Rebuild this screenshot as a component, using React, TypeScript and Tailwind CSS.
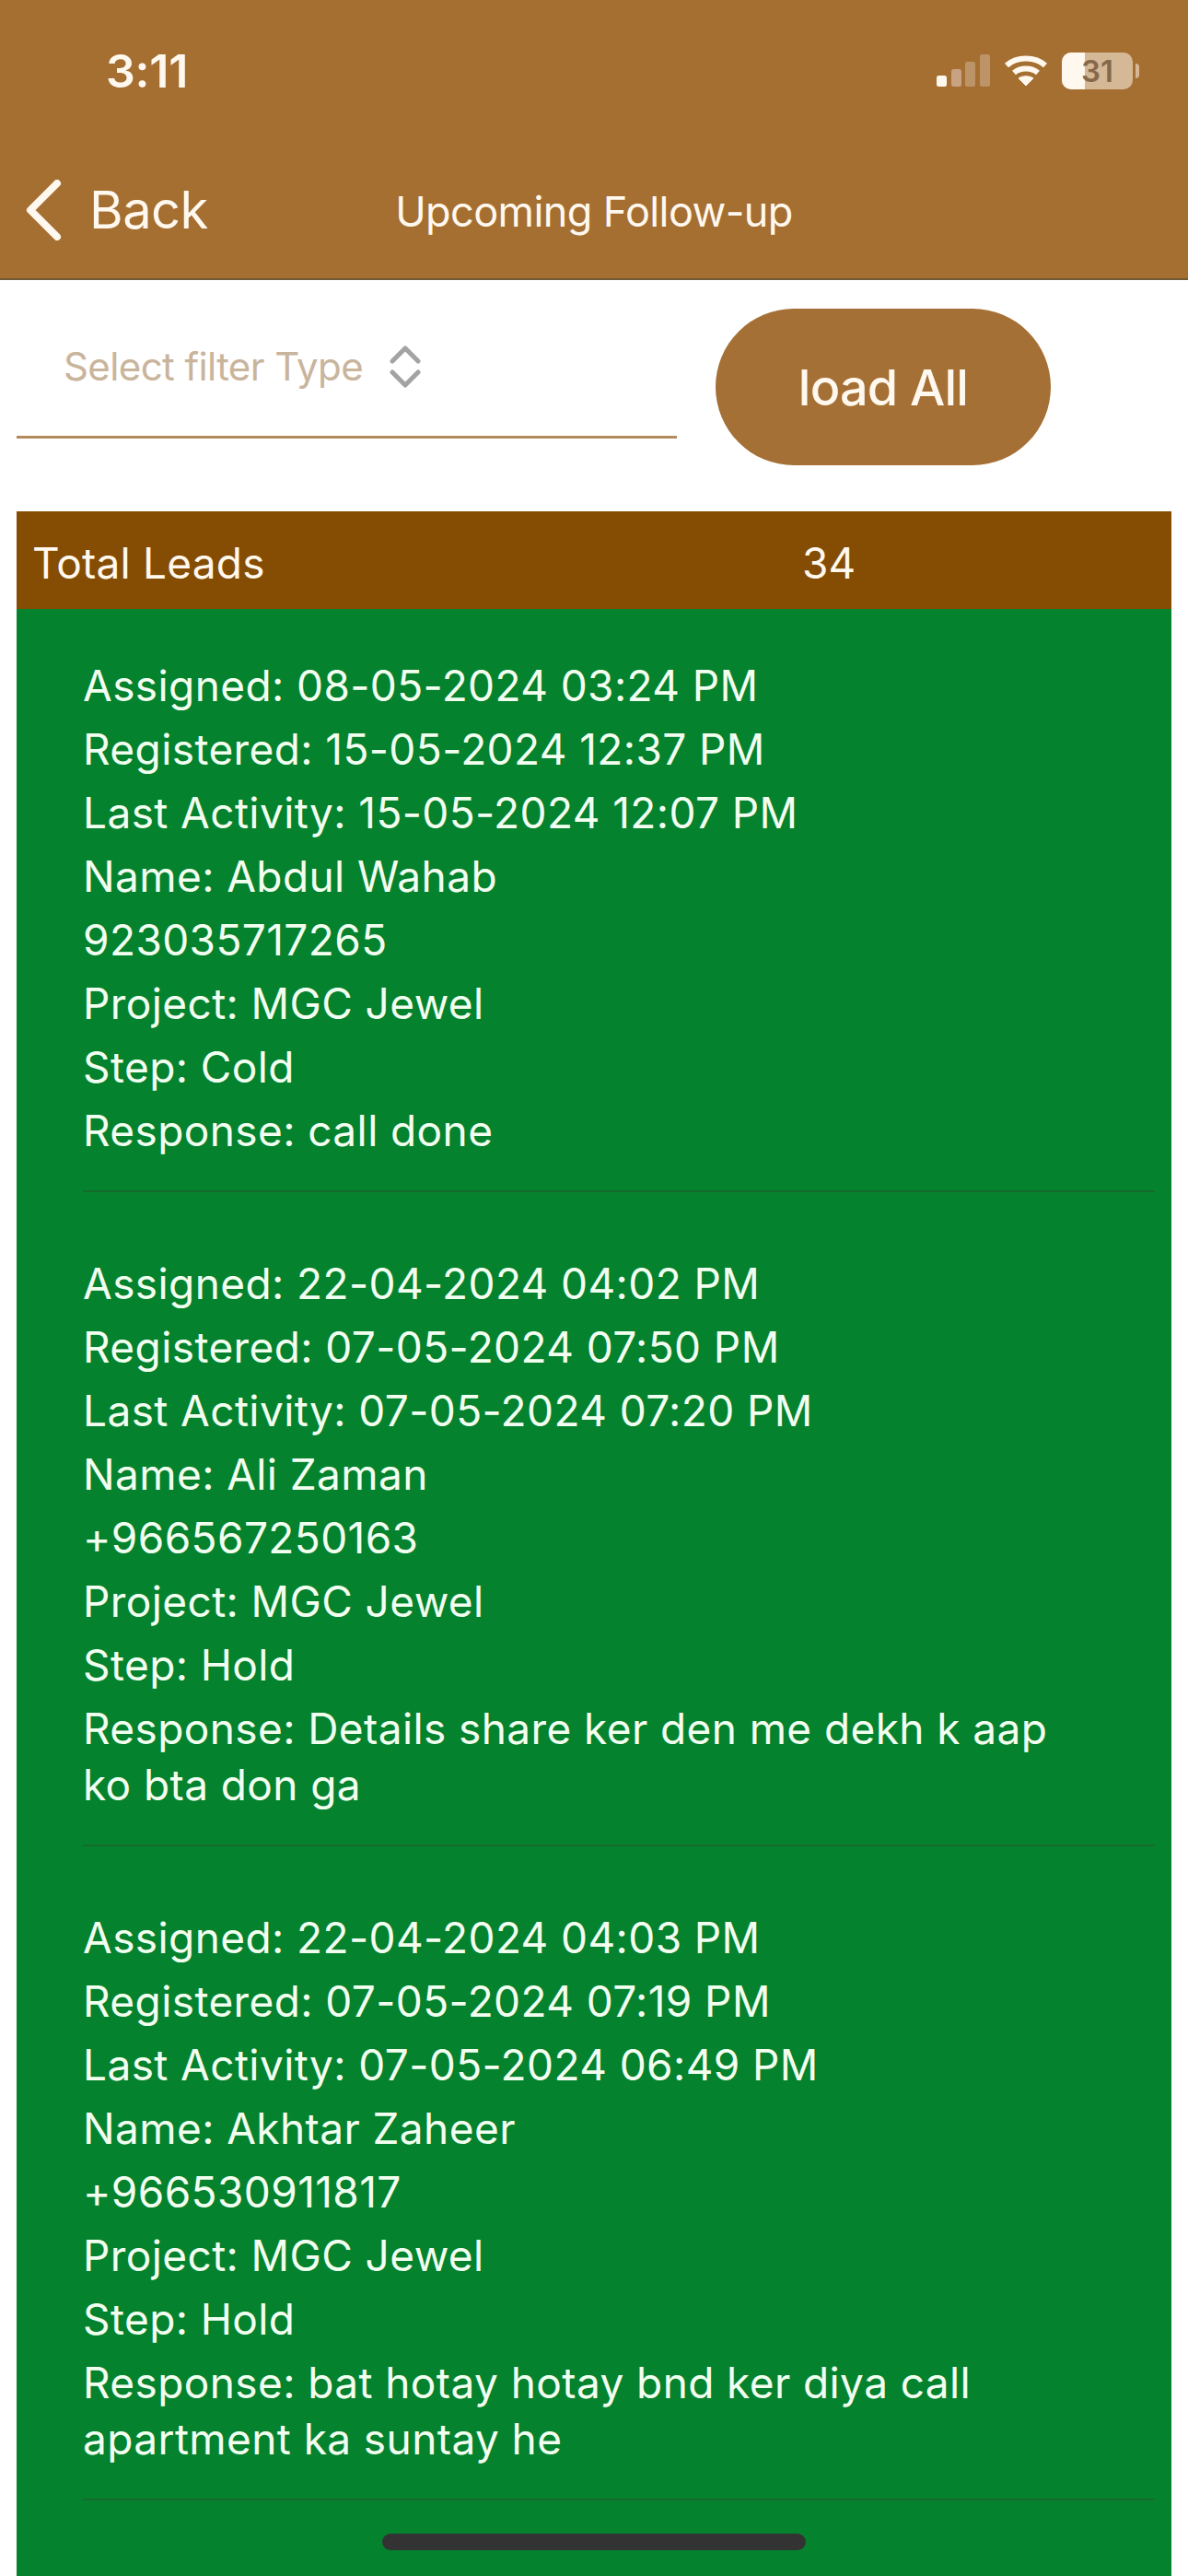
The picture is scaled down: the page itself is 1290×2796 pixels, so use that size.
const font = "font-['Inter','Liberation_Sans',sans-serif]";

type Lead = {
  assigned: string;
  registered: string;
  activity: string;
  name: string;
  phone: string;
  step: string;
  response: string;
};

const leads: Lead[] = [
  {
    assigned: "08-05-2024 03:24 PM",
    registered: "15-05-2024 12:37 PM",
    activity: "15-05-2024 12:07 PM",
    name: "Abdul Wahab",
    phone: "923035717265",
    step: "Cold",
    response: "call done",
  },
  {
    assigned: "22-04-2024 04:02 PM",
    registered: "07-05-2024 07:50 PM",
    activity: "07-05-2024 07:20 PM",
    name: "Ali Zaman",
    phone: "+966567250163",
    step: "Hold",
    response: "Details share ker den me dekh k aap ko bta don ga",
  },
  {
    assigned: "22-04-2024 04:03 PM",
    registered: "07-05-2024 07:19 PM",
    activity: "07-05-2024 06:49 PM",
    name: "Akhtar Zaheer",
    phone: "+966530911817",
    step: "Hold",
    response: "bat hotay hotay bnd ker diya call apartment ka suntay he",
  },
];

function StatusIcons() {
  return (
    <div className="flex items-center">
      <svg width="58" height="36" viewBox="0 0 58 36">
        <rect x="0" y="23" width="11" height="12" rx="2.5" fill="#fff8ee" />
        <rect x="16" y="16" width="11" height="19" rx="2.5" fill="#c9a183" />
        <rect x="31" y="8" width="11" height="27" rx="2.5" fill="#bd9467" />
        <rect x="47" y="0" width="11" height="35" rx="2.5" fill="#bd9467" />
      </svg>
      <svg className="ml-[15px]" width="48" height="34" viewBox="0 0 48 34" fill="none" stroke="#fff8ee" strokeLinecap="butt">
        <path d="M3 11 C14 1 34 1 45 11" strokeWidth="6" />
        <path d="M11 19 C18 13 30 13 37 19" strokeWidth="6" />
        <path d="M24 33 L16 25 C20 22 28 22 32 25 Z" fill="#fff8ee" strokeWidth="1" />
      </svg>
      <div className="relative ml-[15px] flex h-[40px] w-[77px] items-center justify-center overflow-hidden rounded-[10px] bg-[#d5b896]">
        <div className="absolute inset-y-0 left-0 w-[25px] bg-[#fff8ee]" />
        <span className="relative text-[33px] font-semibold leading-[40px] text-[#86694a]">31</span>
      </div>
      <div className="ml-[3px] h-[16px] w-[4px] rounded-r-full bg-[#d5b896]" />
    </div>
  );
}

function LeadRow({ text }: { text: string }) {
  return <p className="pr-[60px] leading-[61px]">{text}</p>;
}

export default function App() {
  return (
    <div className={`relative h-[2796px] w-[1290px] overflow-hidden bg-white ${font}`}>
      <header className="h-[304px] border-b-2 border-[#6f5a35] bg-[#a56f32] text-[#fff8ee]">
        <div className="flex h-[154px] items-center justify-between pl-[115px] pr-[53px]">
          <span className="text-[50px] font-semibold leading-[56px] tracking-[-0.2px]">3:11</span>
          <StatusIcons />
        </div>
        <div className="relative flex h-[148px] items-center">
          <svg className="ml-[28px]" width="40" height="66" viewBox="0 0 40 66" fill="none" stroke="#fff8ee" strokeWidth="8" strokeLinecap="round" strokeLinejoin="round">
            <path d="M34 4 L5 33 L34 62" />
          </svg>
          <span className="ml-[29px] text-[56px] leading-[70px] tracking-[-0.5px]">Back</span>
          <span className="absolute left-0 right-0 top-[41px] text-center text-[45px] leading-[70px] tracking-[-0.6px]">
            Upcoming Follow-up
          </span>
        </div>
      </header>

      <div className="flex items-start pl-[18px] pt-[31px]">
        <div className="h-[141px] w-[717px] border-b-[3px] border-[#b28a5b]">
          <div className="flex items-center pl-[51px] pt-[28px]">
            <span className="text-[42px] leading-[70px] tracking-[-0.6px] text-[#c9b49c]">Select filter Type</span>
            <svg className="ml-[28px]" width="36" height="46" viewBox="0 0 36 46" fill="none" stroke="#a3a3a3" strokeWidth="5" strokeLinecap="round" strokeLinejoin="round">
              <path d="M4 17 L18 3 L32 17" />
              <path d="M4 29 L18 43 L32 29" />
            </svg>
          </div>
        </div>
        <button className="ml-[42px] h-[170px] w-[364px] rounded-[85px] bg-[#a57035] text-[54px] font-medium tracking-[-0.8px] text-[#fff8ee]">
          load All
        </button>
      </div>

      <div className="mx-[18px] mt-[50px] flex h-[106px] items-center bg-[#854d03] pl-[17px] pt-[6px] text-[46px] tracking-[0.2px] text-[#fff8ee]">
        <span className="w-[836px]">Total Leads</span>
        <span>34</span>
      </div>

      <div className="mx-[18px] h-[2200px] bg-[#05822e] pl-[72px] pr-[18px] pt-[53px] text-[46px] tracking-[0.4px] text-[#f2fff0]">
        {leads.map((lead) => (
          <div key={lead.name} className="mb-[69px] flex flex-col gap-[8px] border-b-2 border-[#166b2c] pb-[34px]">
            <LeadRow text={`Assigned: ${lead.assigned}`} />
            <LeadRow text={`Registered: ${lead.registered}`} />
            <LeadRow text={`Last Activity: ${lead.activity}`} />
            <LeadRow text={`Name: ${lead.name}`} />
            <LeadRow text={lead.phone} />
            <LeadRow text="Project: MGC Jewel" />
            <LeadRow text={`Step: ${lead.step}`} />
            <LeadRow text={`Response: ${lead.response}`} />
          </div>
        ))}
      </div>

      <div className="absolute bottom-[28px] left-[415px] h-[18px] w-[460px] rounded-full bg-[#333333]" />
    </div>
  );
}
